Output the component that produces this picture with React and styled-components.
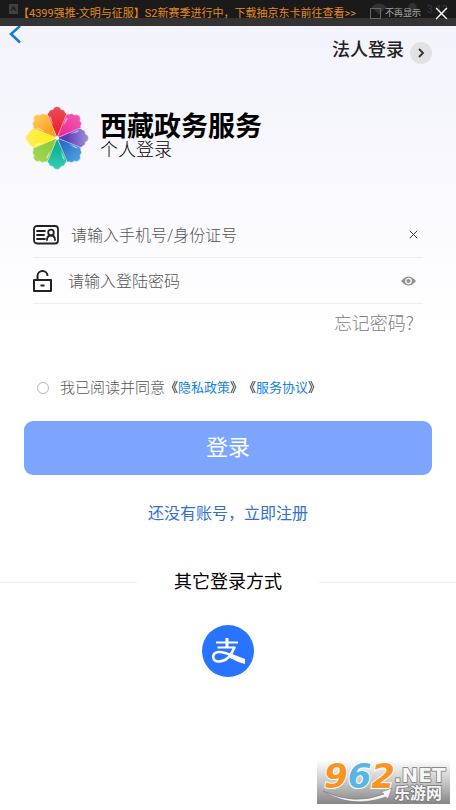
import React from "react";
import styled, { createGlobalStyle } from "styled-components";

const GlobalStyle = createGlobalStyle`
  * { box-sizing: border-box; }
  body {
    margin: 0;
    background: #ffffff;
    font-family: Roboto, "Noto Sans CJK SC", sans-serif;
    color: #000000;
  }
  button, input { font: inherit; }
  button { border: 0; padding: 0; background: none; cursor: pointer; }
  a { text-decoration: none; }
  svg { display: block; flex: none; }
`;

const Page = styled.div`
  display: flex;
  flex-direction: column;
  min-height: 100vh;
  background: linear-gradient(#f2f3fc 26px, #f8f8fd 170px, #fdfdff 270px, #ffffff 340px);
`;

const Banner = styled.aside`
  position: relative;
  display: flex;
  align-items: center;
  height: 26px;
  padding: 0 8px 0 18px;
  background: linear-gradient(#1a1a1a 18px, #333333 18px);
`;

const SystemStatus = styled.div`
  position: absolute;
  inset: 0 8px auto 9px;
  display: flex;
  align-items: center;
  justify-content: space-between;
  height: 18px;
  color: #383838;
  font-size: 11px;
`;

const StatusGroup = styled.span`
  display: flex;
  align-items: center;
  gap: 5px;
`;

const Promo = styled.a`
  position: relative;
  flex: 1;
  color: #e58a22;
  font-size: 11px;
  line-height: 26px;
  padding-top: 2px;
  white-space: nowrap;
`;

const Dismiss = styled.label`
  position: relative;
  display: flex;
  align-items: center;
  gap: 4px;
  margin-right: 14px;
  color: #a5a5a5;
  font-size: 9px;
  line-height: 26px;
  white-space: nowrap;
`;

const SquareCheck = styled.input`
  appearance: none;
  width: 11px;
  height: 11px;
  margin: 0;
  border: 1px solid #666666;
  &:checked { background: #999999; }
`;

const CloseButton = styled.button`
  position: relative;
  color: #ffffff;
`;

const Header = styled.header`
  display: flex;
  align-items: flex-start;
  justify-content: space-between;
  height: 78px;
  padding: 0 24px 0 8px;
`;

const BackButton = styled.button`
  color: #1377e8;
`;

const CorporateLink = styled.a`
  display: flex;
  align-items: center;
  gap: 6px;
  padding-top: 9px;
  color: #222222;
  font-size: 18px;
  font-weight: 500;
  line-height: 30px;
`;

const RoundArrow = styled.span`
  display: grid;
  place-items: center;
  width: 22px;
  height: 22px;
  margin-top: 6px;
  border-radius: 50%;
  background: #e2e2e3;
`;

const Brand = styled.section`
  display: flex;
  align-items: center;
  gap: 10px;
  height: 68px;
  padding-left: 24px;
`;

const BrandText = styled.div`
  padding-bottom: 3px;
`;

const BrandTitle = styled.h1`
  margin: 0;
  font-size: 27px;
  font-weight: 700;
  line-height: 26px;
`;

const BrandSubtitle = styled.p`
  margin: 0;
  font-size: 18px;
  font-weight: 300;
  line-height: 20px;
`;

const Form = styled.form`
  display: flex;
  flex-direction: column;
  padding: 40px 24px 0;
`;

const Field = styled.div`
  display: flex;
  align-items: center;
  gap: ${(p) => p.$gap}px;
  height: 46px;
  margin: 0 9px;
  padding-right: ${(p) => p.$end}px;
  border-bottom: 1px solid #ececef;
`;

const TextInput = styled.input`
  flex: 1;
  min-width: 0;
  padding: 2px 0 0;
  border: 0;
  outline: 0;
  background: transparent;
  color: #333333;
  font-size: 16px;
  font-weight: 300;
  line-height: 24px;
  &::placeholder { color: #555555; opacity: 1; }
`;

const ForgotLink = styled.a`
  align-self: flex-end;
  margin-right: 18px;
  padding-top: 3px;
  color: #808080;
  font-family: "Noto Sans CJK SC", sans-serif;
  font-size: 18px;
  font-weight: 300;
  line-height: 30px;
`;

const Agreement = styled.div`
  display: flex;
  align-items: center;
  margin: 36px 0 18px 13px;
  font-size: 13px;
  line-height: 30px;
  white-space: nowrap;
`;

const AgreementLabel = styled.label`
  display: flex;
  align-items: center;
  gap: 11px;
  color: #555555;
  font-size: 15px;
  font-weight: 300;
  line-height: 30px;
`;

const RoundCheck = styled.input`
  appearance: none;
  width: 12px;
  height: 12px;
  margin: 0;
  border: 1px solid #b5b5b5;
  border-radius: 50%;
  &:checked { background: #1680e4; }
`;

const PolicyLink = styled.a`
  color: #1680e4;
`;

const SubmitButton = styled.button`
  height: 54px;
  border-radius: 9px;
  background: #7ba5ff;
  color: #ffffff;
  font-size: 22px;
  line-height: 54px;
`;

const RegisterLink = styled.a`
  align-self: center;
  margin-top: 24px;
  color: #3070d0;
  font-size: 16px;
  line-height: 30px;
`;

const OtherHeading = styled.h2`
  display: grid;
  grid-template-columns: 1fr auto 1fr;
  align-items: center;
  gap: 37px;
  margin: 38px 0 0;
  font-size: 18px;
  font-weight: 400;
  line-height: 30px;
  &::before, &::after {
    content: "";
    height: 1px;
    background: #ececec;
  }
`;

const AlipayButton = styled.button`
  align-self: center;
  margin-top: 28px;
  border-radius: 50%;
`;

const Footer = styled.footer`
  display: flex;
  justify-content: flex-end;
  margin-top: auto;
  padding: 0 6px 6px 0;
`;

const WatermarkSvg = styled.svg`
  overflow: visible;
`;

const petals = [
  ["#ee2533", "#e8505c"],
  ["#f0309a", "#ee5bb0"],
  ["#5a3fb4", "#a48fdc"],
  ["#2f6fc4", "#4fa3e4"],
  ["#12b09a", "#35d0b4"],
  ["#8ecb3c", "#a4d65a"],
  ["#fff01e", "#fbee5a"],
  ["#ffa01e", "#ffcb5c"],
];

function FlowerLogo() {
  return (
    <svg width="66" height="66" viewBox="-33 -33 66 66" role="img" aria-label="西藏政务服务">
      <defs>
        {petals.map(([inner, outer], i) => (
          <linearGradient key={inner} id={`petal${i}`} x1="0.5" y1="1" x2="0.5" y2="0">
            <stop offset="0.3" stopColor={inner} />
            <stop offset="1" stopColor={outer} />
          </linearGradient>
        ))}
      </defs>
      {petals.map(([inner], i) => (
        <g key={inner} transform={`rotate(${i * 45})`}>
          <path
            d="M0 0 L-9.500-22 Q-10-25-8-25.500 Q-8-28.500-4-28.500 Q-3-31.500 0-31.500 Q3-31.500 4-28.500 Q8-28.500 8-25.500 Q10-25 9.500-22Z"
            fill={`url(#petal${i})`}
            stroke="#ffffff"
            strokeWidth="0.4"
          />
          <path d="M-8-22 Q-7-18-4-13 Q-5-18-6-21Z" fill="#ffffff" opacity="0.5" />
        </g>
      ))}
      <circle r="2" fill="#ffffff" />
    </svg>
  );
}

function IdCardIcon() {
  return (
    <svg width="26" height="20" viewBox="0 0 26 20" fill="none" stroke="#222222" strokeWidth="1.8">
      <rect x="1" y="1" width="24" height="17.5" rx="3" />
      <path d="M4 6h8M4 10h7M4 14h8" strokeLinecap="round" />
      <circle cx="18" cy="7.5" r="2.8" />
      <path d="M14 15c0-6 8-6 8 0" strokeLinecap="round" />
    </svg>
  );
}

function LockIcon() {
  return (
    <svg width="19" height="22" viewBox="0 0 19 22" fill="none" stroke="#222222" strokeWidth="2">
      <path d="M1 10h17v11H1zM4.500 10V6a5 5 0 0 1 10 0M7.500 15.500h4" strokeLinejoin="round" />
    </svg>
  );
}

function EyeIcon() {
  return (
    <svg width="15" height="10" viewBox="0 0 15 10">
      <path d="M0 5Q7.5-4 15 5Q7.5 14 0 5Z" fill="#929292" />
      <circle cx="7.5" cy="5" r="2.7" fill="#929292" stroke="#ffffff" strokeWidth="1.2" />
    </svg>
  );
}

function CrossIcon({ size, color }) {
  return (
    <svg width={size} height={size} viewBox="0 0 12 12" stroke={color} strokeWidth="1.3">
      <path d="M1 1l10 10M11 1L1 11" />
    </svg>
  );
}

function AlipayLogo() {
  return (
    <svg width="52" height="52" viewBox="0 0 52 52" fill="none">
      <circle cx="26" cy="26" r="26" fill="#2873ff" />
      <path d="M14 17.500h22M15.500 22.500h18" stroke="#ffffff" strokeWidth="2" />
      <path d="M25 13v9" stroke="#ffffff" strokeWidth="3" />
      <path
        d="M32.500 22c-3 8-8 14.500-15.500 14.500-7 0-8-8-1-9.500 7-1 13 3.500 26 8"
        stroke="#ffffff"
        strokeWidth="2.500"
      />
      <path d="M28 30q7 3 15 4v5q-8-2-15-6Z" fill="#ffffff" />
    </svg>
  );
}

function Watermark() {
  return (
    <WatermarkSvg width="133" height="44" viewBox="0 0 133 44" role="img" aria-label="962.NET 乐游网">
      <defs>
        <linearGradient id="shade" x1="0" y1="0" x2="0" y2="1">
          <stop stopColor="#ffffff" />
          <stop offset="0.5" stopColor="#c8c8c8" />
          <stop offset="1" stopColor="#858585" />
        </linearGradient>
      </defs>
      <rect width="133" height="44" fill="url(#shade)" />
      <text
        x="7"
        y="28"
        fontFamily="DejaVu Sans, sans-serif"
        fontWeight="700"
        fontStyle="italic"
        fontSize="34"
        stroke="#ffffff"
        strokeWidth="2"
        paintOrder="stroke"
      >
        <tspan fill="#f89422">9</tspan>
        <tspan fill="#58b5e8">6</tspan>
        <tspan fill="#f89422">2</tspan>
      </text>
      <path d="M6 31Q37 46 67 34l-3-2 11-4-4 11-2-2Q34 49 6 31Z" fill="#f5f5f5" stroke="#777777" strokeWidth="0.6" />
      <g fill="#f5f5f5" stroke="#777777" strokeWidth="1.500" paintOrder="stroke" fontWeight="700">
        <text x="77" y="22" fontFamily="DejaVu Sans, sans-serif" fontSize="20">.NET</text>
        <text x="77" y="39" fontFamily="Noto Sans CJK SC, sans-serif" fontSize="16">乐游网</text>
      </g>
    </WatermarkSvg>
  );
}

export default function App() {
  return (
    <>
      <GlobalStyle />
      <Page>
        <Banner>
          <SystemStatus aria-hidden="true">
            <svg width="9" height="10" viewBox="0 0 9 10">
              <path d="M0 0h9v10H0z" fill="#404040" />
              <path d="M2 7l2.500-5L7 7M3 5h3" stroke="#1a1a1a" fill="none" />
            </svg>
            <StatusGroup>
              <svg width="50" height="12" viewBox="0 0 50 12" fill="#333333">
                <path d="M0 4Q7-2 14 4L7 11ZM37 2h2V0h3v2h2v10h-7zM19 3l9 8M27 3l-7 8" stroke="#333333" />
              </svg>
              3:12
            </StatusGroup>
          </SystemStatus>
          <Promo href="#promo">【4399强推-文明与征服】S2新赛季进行中，下载抽京东卡前往查看&gt;&gt;</Promo>
          <Dismiss>
            <SquareCheck type="checkbox" />
            不再显示
          </Dismiss>
          <CloseButton type="button" aria-label="关闭">
            <CrossIcon size={13} color="currentColor" />
          </CloseButton>
        </Banner>

        <Header>
          <BackButton type="button" aria-label="返回">
            <svg width="14" height="18" viewBox="0 0 14 18" fill="none" stroke="currentColor" strokeWidth="2.500">
              <path d="M12 0L3 8l9 8.500" />
            </svg>
          </BackButton>
          <CorporateLink href="#corporate">
            法人登录
            <RoundArrow>
              <svg width="8" height="10" viewBox="0 0 8 10" fill="none" stroke="#333333" strokeWidth="1.800">
                <path d="M2 1l4 4-4 4" />
              </svg>
            </RoundArrow>
          </CorporateLink>
        </Header>

        <Brand>
          <FlowerLogo />
          <BrandText>
            <BrandTitle>西藏政务服务</BrandTitle>
            <BrandSubtitle>个人登录</BrandSubtitle>
          </BrandText>
        </Brand>

        <Form onSubmit={(e) => e.preventDefault()}>
          <Field $gap={12} $end={5}>
            <IdCardIcon />
            <TextInput type="text" aria-label="手机号/身份证号" placeholder="请输入手机号/身份证号" />
            <button type="button" aria-label="清除">
              <CrossIcon size={9} color="#333333" />
            </button>
          </Field>
          <Field $gap={16} $end={7}>
            <LockIcon />
            <TextInput type="password" aria-label="登陆密码" placeholder="请输入登陆密码" />
            <button type="button" aria-label="显示密码">
              <EyeIcon />
            </button>
          </Field>
          <ForgotLink href="#forgot">忘记密码?</ForgotLink>
          <Agreement>
            <AgreementLabel>
              <RoundCheck type="checkbox" />
              我已阅读并同意
            </AgreementLabel>
            <span>《<PolicyLink href="#privacy">隐私政策</PolicyLink>》</span>
            <span>《<PolicyLink href="#terms">服务协议</PolicyLink>》</span>
          </Agreement>
          <SubmitButton type="submit">登录</SubmitButton>
          <RegisterLink href="#register">还没有账号，立即注册</RegisterLink>
        </Form>

        <OtherHeading>其它登录方式</OtherHeading>
        <AlipayButton type="button" aria-label="支付宝登录">
          <AlipayLogo />
        </AlipayButton>

        <Footer>
          <Watermark />
        </Footer>
      </Page>
    </>
  );
}
